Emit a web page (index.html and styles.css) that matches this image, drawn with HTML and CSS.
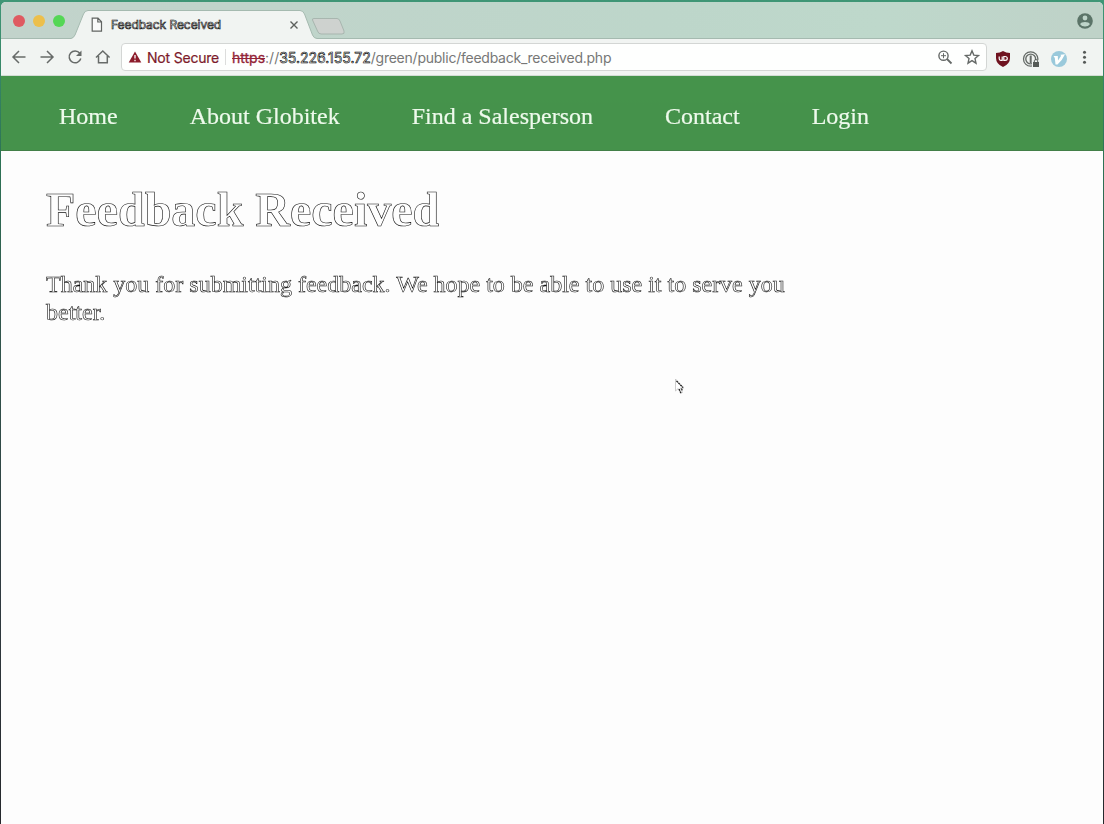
FILE: index.html
```
<!DOCTYPE html>
<html lang="en">
<head>
<meta charset="utf-8">
<title>Feedback Received</title>
<link rel="stylesheet" href="styles.css">
</head>
<body>
<div class="window">
  <div class="tabstrip">
    <svg class="tab-shapes" width="1102" height="37" viewBox="1 2 1102 37">
      <path d="M1 38.500H72Q74 38 75 35L83.500 14Q85 10.500 88 10.500H300Q303 10.500 304.500 14L312.500 35Q314 38.500 317 38.500H1103V40H1Z" fill="#f2f4f3"/>
      <path d="M1 38.500H71Q73.500 38 75 35L83.500 14Q85 10.500 88 10.500H300Q303 10.500 304.500 14L312.500 35Q314 38.500 317 38.500H1103" fill="none" stroke="#a6bab1"/>
      <path d="M314 18.500H337Q339 18.500 340 21L344 31Q345 34 342 34H321Q318.500 34 317.500 31L312.500 20Q312 18.500 314 18.500Z" fill="#cfd2d0" stroke="#a9b6b0"/>
    </svg>
    <div class="lights"><i class="light red"></i><i class="light yellow"></i><i class="light green"></i></div>
    <svg class="doc-icon" width="12" height="16" viewBox="0 0 12 16"><path d="M1.200 1.200H7L10.500 4.800V14.200H1.200ZM6.800 1.500V5H10.300" fill="#fafafa" stroke="#626463" stroke-width="1.200"/></svg>
    <span class="tab-title outlined-small">Feedback Received</span>
    <svg class="close" width="10" height="10" viewBox="0 0 10 10"><path d="M1.500 1.500L8.500 8.500M8.500 1.500L1.500 8.500" stroke="#5d605e" stroke-width="1.400"/></svg>
    <svg class="account" width="16" height="16" viewBox="0 0 16 16"><circle cx="8" cy="8" r="7.800" fill="#5c7469"/><circle cx="8" cy="5" r="2.400" fill="#bfd4ca"/><path d="M3.200 11.300C3.500 8.100 12.500 8.100 12.800 11.300C10.700 14.300 5.300 14.300 3.200 11.300Z" fill="#bfd4ca"/></svg>
  </div>
  <div class="toolbar">
    <svg class="nav-icons" width="102" height="20" viewBox="10 47 102 20" fill="none" stroke="#686b6a" stroke-width="1.500">
      <path d="M25.500 57H13.500M19 51L13 57L19 63M40.500 57H52.500M47 51L53 57L47 63"/>
      <path d="M79.800 53.300A5.900 5.900 0 1 0 80.800 58.500"/><path d="M81.500 50.500V56H76Z" fill="#686b6a" stroke="none"/>
      <path d="M96 57.500L102.800 51L109.600 57.500M98.500 56V62.800H107.300V56"/>
    </svg>
    <div class="address">
      <svg class="warn" width="14" height="12" viewBox="0 0 14 12"><path d="M7 .5L13.300 11.500H.7Z" fill="#8d1c2c"/><path d="M7 4V7.500M7 8.800V10.200" stroke="#fff" stroke-width="1.300"/></svg>
      <span class="insecure">Not Secure</span>
      <span class="scheme">https</span><span class="slashes">://</span><span class="host outlined-small">35.226.155.72</span><span class="path">/green/public/feedback_received.php</span>
      <svg class="field-icons" width="44" height="18" viewBox="937 48 44 18" fill="none" stroke="#666968" stroke-width="1.400"><circle cx="943.500" cy="55.700" r="4.600"/><path d="M947 59L951.500 63.500" stroke-width="1.800"/><path d="M941 55.700H946M943.500 53.200V58.200" stroke-width="1"/><path d="M972 50.800L973.800 55.100L978.500 55.500L975 58.600L976 63.200L972 60.700L968 63.200L969 58.600L965.500 55.500L970.200 55.100Z"/></svg>
    </div>
    <svg class="extensions" width="100" height="20" viewBox="993 49 100 20">
      <path d="M1003 51Q1006 53 1010 53V58Q1010 64 1003 67Q996 64 996 58V53Q1000 53 1003 51Z" fill="#701220"/>
      <path d="M999.200 56.500V58.800Q999.200 60.300 1000.700 60.300H1002.200V56.500" fill="none" stroke="#fff" stroke-width="1.200"/><path d="M1003.800 56.500H1005Q1007.300 56.500 1007.300 58.400Q1007.300 60.300 1005 60.300H1003.800Z" fill="none" stroke="#fff" stroke-width="1.200"/>
      <g fill="none" stroke="#676b69"><circle cx="1030.700" cy="59" r="7.200" stroke-width="1.300"/><circle cx="1030.700" cy="59" r="4.900" stroke-width="1.400"/><path d="M1030.700 55.500V63" stroke-width="2"/></g>
      <path d="M1032 60H1039V67H1032Z" fill="#f2f4f3"/><path d="M1033 62H1039V67H1033Z" fill="#565a58"/><path d="M1034.300 62V60.500Q1036 58.500 1037.700 60.500V62" fill="none" stroke="#565a58"/>
      <circle cx="1059" cy="59" r="8" fill="#9bc9dc"/><path d="M1053.500 56H1057.800L1058 60.500L1061 56L1060.500 54.800L1065 54.200Q1062.500 60 1057.500 64.500H1055.500L1054.800 58Z" fill="#fff"/>
      <g fill="#565958"><circle cx="1084.500" cy="52.300" r="1.500"/><circle cx="1084.500" cy="57.300" r="1.500"/><circle cx="1084.500" cy="62.300" r="1.500"/></g>
    </svg>
  </div>
  <nav class="site-nav"><a>Home</a><a>About Globitek</a><a>Find a Salesperson</a><a>Contact</a><a>Login</a></nav>
  <main class="content">
    <h1 class="outlined">Feedback Received</h1>
    <p class="outlined">Thank you for submitting feedback. We hope to be able to use it to serve you better.</p>
  </main>
</div>
<svg class="cursor" width="12" height="18" viewBox="0 0 12 18"><path d="M1.500 1V13L4.200 10.500L6.500 15.500L8.500 14.500L6.300 10H10Z" fill="#fff" stroke="#b8b8b8" stroke-width=".7"/><path d="M2.500 3L9 9.500M5 11L7 15M7.500 10.500L8.500 13" stroke="#111" stroke-width="1.200" stroke-dasharray="2 .7"/></svg>
</body>
</html>
```
FILE: styles.css
```
* { box-sizing: border-box; }
body {
  margin: 0;
  width: 1104px;
  height: 824px;
  overflow: hidden;
  padding: 2px 1px 0;
  background: linear-gradient(#3f9676 0, #2d7556 150px, #31584d 300px, #303a40 600px, #25282c);
}
svg { display: block; flex: none; }
span { white-space: nowrap; }
.window {
  height: 822px;
  display: flex;
  flex-direction: column;
  background: #fefefe;
  border-radius: 5px 5px 0 0;
  overflow: hidden;
  opacity: .999;
  will-change: opacity;
}
.tabstrip {
  position: relative;
  height: 37px;
  flex: none;
  display: flex;
  align-items: flex-start;
  background: linear-gradient(90deg, #c3d3cc, #bed6cb 60%, #bfd8cc 80%, #c0d2c9);
}
.tab-shapes { position: absolute; inset: 0; }
.lights, .doc-icon, .tab-title, .close, .account { position: relative; }
.lights { display: flex; gap: 8px; padding: 13px 0 0 12px; }
.light { width: 12px; height: 12px; border-radius: 50%; }
.red { background: #e05a62; }
.yellow { background: #edbf4c; }
.green { background: #55d756; }
.doc-icon { margin: 15px 0 0 26px; }
.tab-title {
  width: 184px;
  margin: 15px 0 0 8px;
  font: 12px/16px Inter, sans-serif;
  letter-spacing: -.06px;
}
.close { margin: 18px 0 0 -6px; }
.account { margin: 11px 10px 0 auto; }
.outlined { color: #fff; -webkit-text-stroke: .6px #111; }
.outlined-small { color: #fff; -webkit-text-stroke: .6px #000; }
.toolbar {
  height: 37px;
  flex: none;
  display: flex;
  align-items: flex-start;
  background: #f2f4f3;
  border-bottom: 1px solid #d3ddd5;
}
.nav-icons { margin: 8px 0 0 9px; }
.address {
  width: 866px;
  height: 28px;
  margin: 4px 0 0 9px;
  display: flex;
  align-items: center;
  padding: 0 5px 0 6px;
  background: #fff;
  border: 1px solid #d4d6d5;
  border-radius: 4px;
  font: 14px/18px Inter, sans-serif;
  color: #777;
}
.insecure {
  width: 79px;
  height: 16px;
  line-height: 17px;
  margin-left: 5px;
  letter-spacing: -.2px;
  border-right: 1px solid #ddd;
  color: #7d1b2c;
  -webkit-text-stroke: .2px #7d1b2c;
}
.scheme, .slashes, .host, .path { padding-top: 1px; }
.scheme { margin-left: 6px; color: #942438; text-decoration: line-through; -webkit-text-stroke: .3px #942438; }
.path { letter-spacing: -.24px; }
.field-icons { margin-left: auto; }
.extensions { margin: 10px 0 0 6px; }
.site-nav {
  height: 75px;
  flex: none;
  display: flex;
  gap: 72px;
  padding: 26px 58px 0;
  background: #46934c;
  border-bottom: 1px solid #438049;
  font: 24px/28px "Liberation Serif", serif;
  color: #effbed;
  -webkit-text-stroke: .2px #effbed;
}
.content { padding: 31px 45px; font-family: "Liberation Serif", serif; }
h1 { margin: 0; font-size: 48px; line-height: 56px; }
p { width: 760px; margin: 32px 0 0; font-size: 24px; line-height: 28px; }
.cursor { position: absolute; left: 674px; top: 378px; }
```
